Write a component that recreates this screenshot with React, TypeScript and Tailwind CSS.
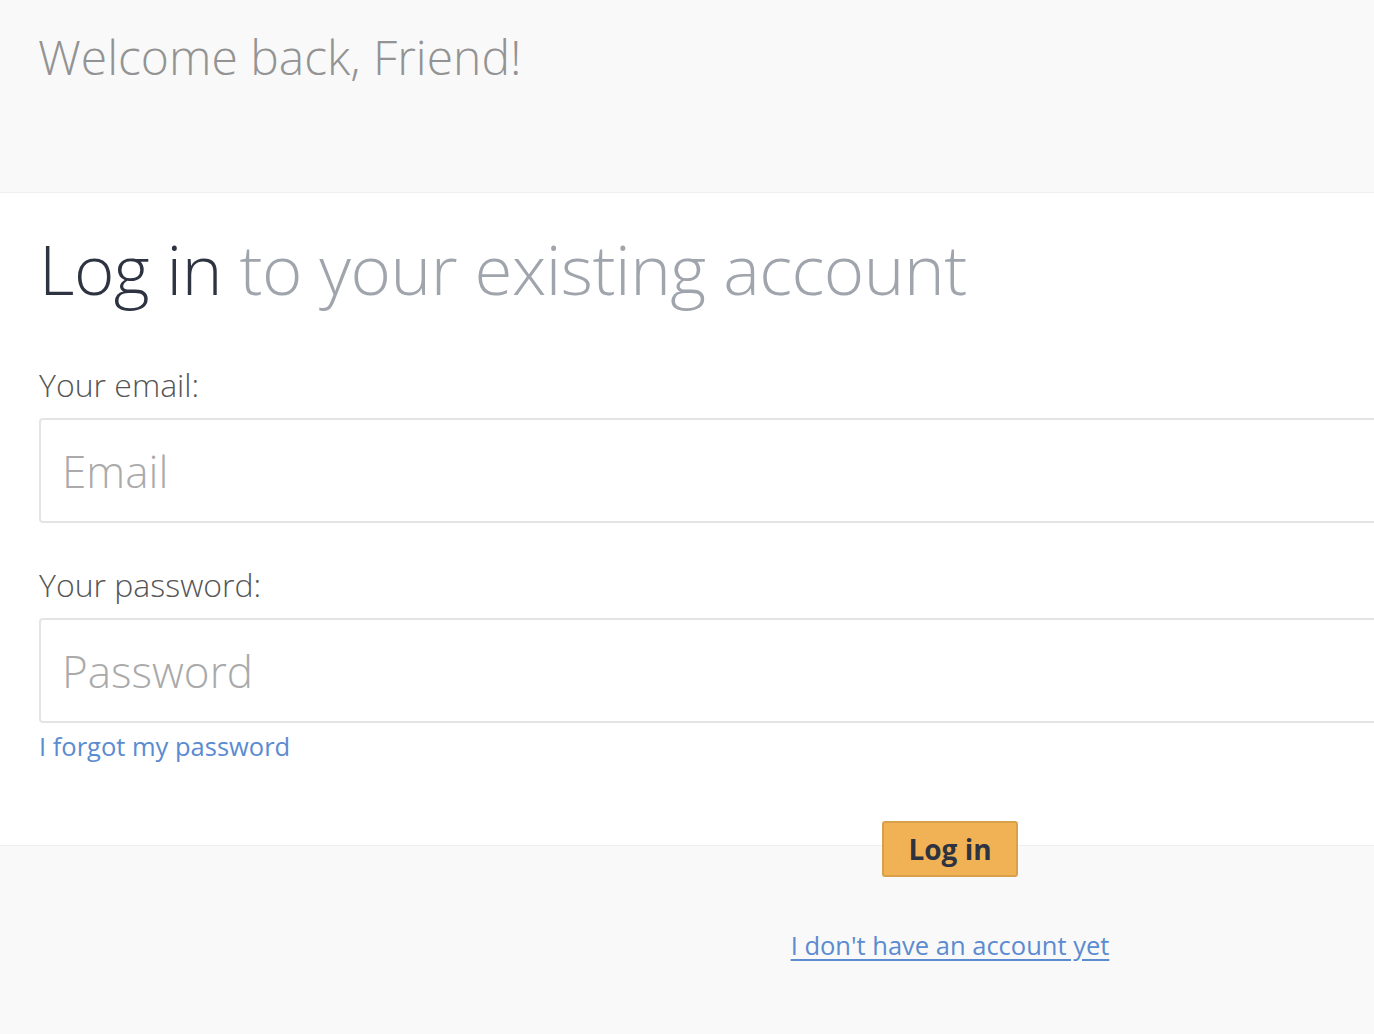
export default function App() {
  return (
    <div
      className="min-h-screen w-full overflow-hidden bg-[#f9f9f9]"
      style={{ fontFamily: '"Open Sans", "Noto Sans", sans-serif' }}
    >
      <div className="w-[1900px]">
        <header className="h-[193px] border-b border-[#efefef] bg-[#f9f9f9] pl-[38px] pt-[33px]">
          <h2 className="text-[48px] font-light leading-none text-[#939393]">Welcome back, Friend!</h2>
        </header>

        <section className="bg-white px-[39px] pt-[41px] pb-[85px]">
          <h1 className="text-[69px] font-light leading-none tracking-[-0.5px] text-[#2d3340]">
            Log in <span className="text-[#a0a5ad]">to your existing account</span>
          </h1>

          <form className="mt-[66px]">
            <label className="block text-[32px] font-light leading-none text-[#555]">Your email:</label>
            <input
              type="email"
              placeholder="Email"
              className="mt-[17px] block h-[105px] w-full rounded-[4px] border-2 border-[#e4e4e4] px-[21px] text-[44px] font-light text-[#333] outline-none placeholder:text-[#aaa]"
            />

            <label className="mt-[46px] block text-[32px] font-light leading-none text-[#555]">Your password:</label>
            <input
              type="password"
              placeholder="Password"
              className="mt-[17px] block h-[105px] w-full rounded-[4px] border-2 border-[#e4e4e4] px-[21px] text-[44px] font-light text-[#333] outline-none placeholder:text-[#aaa]"
            />

            <a href="#" className="mt-[11px] block w-fit text-[25.5px] leading-none text-[#5b8bd0]">
              I forgot my password
            </a>
          </form>
        </section>

        <footer className="flex flex-col items-center border-t border-[#efefef] pb-[60px]">
          <button className="-mt-[25px] h-[56px] w-[136px] rounded-[3px] border-2 border-[#d9a04a] bg-[#f0b254] text-[28px] font-bold leading-none text-[#2d3340]">
            Log in
          </button>
          <a href="#" className="mt-[56px] text-[25.5px] leading-none text-[#5b8bd0] underline underline-offset-[4px]">
            I don't have an account yet
          </a>
        </footer>
      </div>
    </div>
  );
}
